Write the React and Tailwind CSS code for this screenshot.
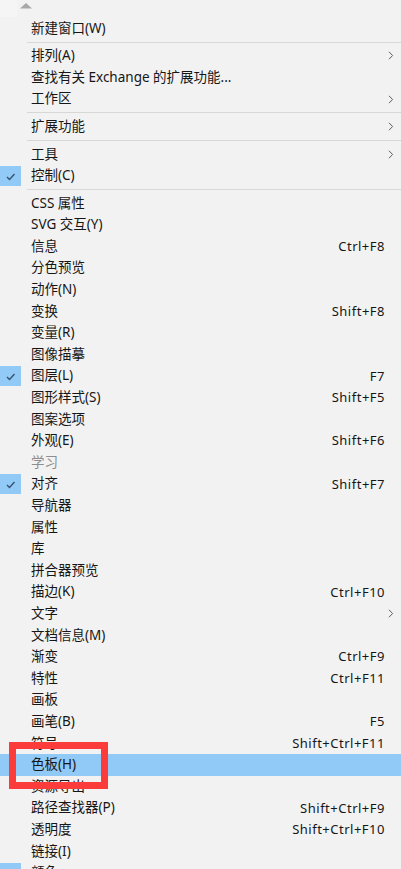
import React from "react"

const SEP = { sep: true }

const items = [
  { label: "新建窗口(W)" },
  SEP,
  { label: "排列(A)", sub: true },
  { label: "查找有关 Exchange 的扩展功能..." },
  { label: "工作区", sub: true },
  SEP,
  { label: "扩展功能", sub: true },
  SEP,
  { label: "工具", sub: true },
  { label: "控制(C)", checked: true },
  SEP,
  { label: "CSS 属性" },
  { label: "SVG 交互(Y)" },
  { label: "信息", key: "Ctrl+F8" },
  { label: "分色预览" },
  { label: "动作(N)" },
  { label: "变换", key: "Shift+F8" },
  { label: "变量(R)" },
  { label: "图像描摹" },
  { label: "图层(L)", checked: true, key: "F7" },
  { label: "图形样式(S)", key: "Shift+F5" },
  { label: "图案选项" },
  { label: "外观(E)", key: "Shift+F6" },
  { label: "学习", disabled: true },
  { label: "对齐", checked: true, key: "Shift+F7" },
  { label: "导航器" },
  { label: "属性" },
  { label: "库" },
  { label: "拼合器预览" },
  { label: "描边(K)", key: "Ctrl+F10" },
  { label: "文字", sub: true },
  { label: "文档信息(M)" },
  { label: "渐变", key: "Ctrl+F9" },
  { label: "特性", key: "Ctrl+F11" },
  { label: "画板" },
  { label: "画笔(B)", key: "F5" },
  { label: "符号", key: "Shift+Ctrl+F11" },
  { label: "色板(H)", active: true },
  { label: "资源导出" },
  { label: "路径查找器(P)", key: "Shift+Ctrl+F9" },
  { label: "透明度", key: "Shift+Ctrl+F10" },
  { label: "链接(I)" },
  { label: "颜色", checked: true },
]

function Check() {
  return (
    <svg width="21" height="21" viewBox="0 0 21 21" className="block">
      <path d="M7 11 L9.5 13.5 L14.5 8" fill="none" stroke="#35506b" strokeWidth="1.3" />
    </svg>
  )
}

function Chevron() {
  return (
    <svg width="6" height="9" viewBox="0 0 6 9" className="block">
      <path d="M1 0.8 L4.6 4.5 L1 8.2" fill="none" stroke="#5c5c5c" strokeWidth="1" />
    </svg>
  )
}

function Row({ item }) {
  return (
    <div
      className={`flex h-[21.6px] items-center ${item.active ? "bg-[#91c9f7]" : ""}`}
    >
      <div className="w-[31px] h-full shrink-0 flex items-center">
        {item.checked && (
          <div className="w-[21px] h-[20px] bg-[#91c9f7]">
            <Check />
          </div>
        )}
      </div>
      <span
        className={`flex-1 whitespace-nowrap text-[13.5px] ${item.disabled ? "text-[#8e8e8e]" : "text-[#161616]"}`}
      >
        {item.label}
      </span>
      {item.key && (
        <span className="pr-[16px] tracking-[0.5px] text-[#161616] whitespace-nowrap">{item.key}</span>
      )}
      {item.sub && (
        <span className="pr-[7px]">
          <Chevron />
        </span>
      )}
    </div>
  )
}

export default function App() {
  return (
    <div
      className="relative w-[401px] h-[869px] overflow-hidden bg-[#f2f2f2] text-[13px] leading-none"
      style={{ fontFamily: '"Noto Sans", "Noto Sans CJK SC", sans-serif' }}
    >
      <div className="h-[17.5px] relative">
        <div className="absolute left-0 top-0 w-[17px] h-[17px] bg-[#f5f5f5]" />
        <svg width="12" height="6" viewBox="0 0 12 6" className="absolute left-[20px] top-[3px]">
          <path d="M0 5.5 L6 0 L12 5.5 Z" fill="#a8a8a8" />
        </svg>
      </div>

      {items.map((item, i) =>
        item.sep ? (
          <div key={i} className="h-[6px] flex items-center pl-[27px]">
            <div className="h-px w-full bg-[#d7d7d7]" />
          </div>
        ) : (
          <Row key={i} item={item} />
        )
      )}

      <div className="absolute left-[9px] top-[742px] w-[99px] h-[47px] border-[7px] border-[#fc3b3b]" />
    </div>
  )
}
